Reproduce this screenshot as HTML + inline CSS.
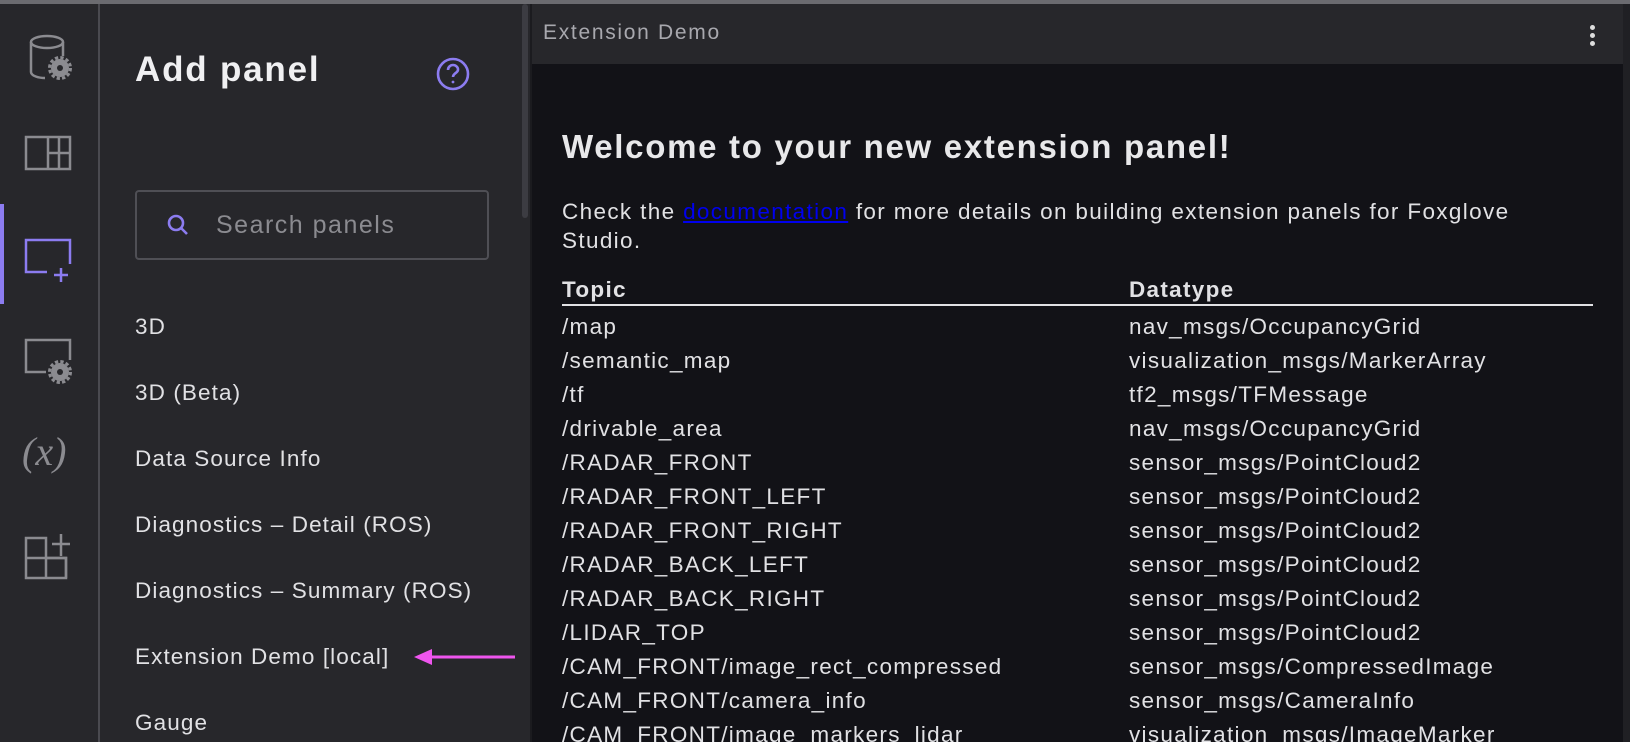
<!DOCTYPE html>
<html><head><meta charset="utf-8"><style>
*{margin:0;padding:0;box-sizing:border-box}
html,body{width:1630px;height:742px;overflow:hidden}
body{background:#27272b;font-family:"Liberation Sans",sans-serif;position:relative;color:#e1e1e4}
.abs{position:absolute}
.item{position:absolute;left:135px;font-size:22.5px;color:#e1e1e4;white-space:nowrap;letter-spacing:1.1px}
.row{position:absolute;font-size:22.5px;color:#e1e1e4;white-space:nowrap;letter-spacing:1.3px}
</style></head><body>
<div class="abs" style="left:0;top:0;width:1630px;height:4px;background:#6b6b70"></div>
<div class="abs" style="left:0;top:4px;width:100px;height:738px;background:#27272b;border-right:2px solid #4a4a50"></div>
<div class="abs" style="left:0;top:204px;width:4px;height:100px;background:#8c7cf0"></div>
<svg class="abs" style="left:0;top:4px" width="100" height="738" fill="none" stroke="#8b8b90" stroke-width="2.5">
 <ellipse cx="47" cy="38" rx="16" ry="6"/>
 <path d="M31 38v30c0 4 8 6 14 6M63 38v14"/>
 <circle cx="60" cy="64" r="9" fill="#8b8b90" stroke="none"/>
 <circle cx="60" cy="64" r="10.5" stroke-dasharray="3.3 2.2" stroke-width="3"/>
 <circle cx="60" cy="64" r="3" fill="#27272b" stroke="none"/>
 <rect x="26" y="133" width="44" height="32"/>
 <path d="M48 133v32M48 149h22M59 133v32"/>
 <path d="M47 268H26V236h44v24M61 264v14M54 271h14" stroke="#8c7cf0"/>
 <path d="M46 368H26V336h44v20"/>
 <circle cx="60" cy="368" r="9" fill="#8b8b90" stroke="none"/>
 <circle cx="60" cy="368" r="10.5" stroke-dasharray="3.3 2.2" stroke-width="3"/>
 <circle cx="60" cy="368" r="3" fill="#27272b" stroke="none"/>
 <path d="M26 534h20v40H26zM26 554h40v20H46M61 530v22M52 540h18"/>
 <path d="M46 554h20v20"/>
</svg>
<div class="abs" style="left:22px;top:428px;font-family:'Liberation Serif',serif;font-size:40px;color:#8b8b90;font-style:italic">(<i>x</i>)</div>
<div class="abs" style="left:135px;top:50px;font-size:35px;font-weight:bold;color:#f0f0f2;letter-spacing:1.8px">Add panel</div>
<svg class="abs" style="left:436px;top:57px" width="34" height="34" fill="none" stroke="#8c7cf0" stroke-width="2.6">
 <circle cx="17" cy="17" r="15"/>
 <path d="M12 13c0-3 2.5-5 5-5s5 2 5 4.6c0 3.4-5 3.6-5 7.4"/>
 <circle cx="17" cy="25" r="1.4" fill="#8c7cf0" stroke="none"/>
</svg>
<div class="abs" style="left:135px;top:190px;width:354px;height:70px;border:2px solid #4f4f55;border-radius:4px"></div>
<svg class="abs" style="left:165px;top:212px" width="28" height="28" fill="none" stroke="#8c7cf0" stroke-width="2.6">
 <circle cx="11" cy="11" r="7"/><path d="M16 16l6 6"/>
</svg>
<div class="abs" style="left:216px;top:211px;font-size:25px;color:#8b8b90;letter-spacing:1.5px">Search panels</div>
<div class="item" style="top:314px">3D</div>
<div class="item" style="top:380px">3D (Beta)</div>
<div class="item" style="top:446px">Data Source Info</div>
<div class="item" style="top:512px">Diagnostics – Detail (ROS)</div>
<div class="item" style="top:578px">Diagnostics – Summary (ROS)</div>
<div class="item" style="top:644px">Extension Demo [local]</div>
<div class="item" style="top:710px">Gauge</div>
<svg class="abs" style="left:410px;top:646px" width="105" height="22">
 <path d="M4 11L22 3v16z" fill="#ee55ee"/><path d="M20 11h92" stroke="#ee55ee" stroke-width="3"/>
</svg>
<div class="abs" style="left:522px;top:4px;width:6px;height:214px;background:#3c3c42;border-radius:3px"></div>
<div class="abs" style="left:530px;top:4px;width:1100px;height:738px;background:#1b1b1f"></div>
<div class="abs" style="left:532px;top:4px;width:1091px;height:60px;background:#27272b"></div>
<div class="abs" style="left:543px;top:21px;font-size:21px;color:#a8a8ae;letter-spacing:1.7px">Extension Demo</div>
<div class="abs" style="left:1590px;top:25px;width:5px;height:5px;border-radius:50%;background:#ddd;box-shadow:0 8px 0 #ddd,0 16px 0 #ddd"></div>
<div class="abs" style="left:532px;top:64px;width:1091px;height:678px;background:#121217"></div>
<div class="abs" style="left:1623px;top:4px;width:7px;height:738px;background:#202024"></div>
<div class="abs" style="left:562px;top:128px;font-size:33px;font-weight:bold;color:#e8e8ea;letter-spacing:1.7px;white-space:nowrap">Welcome to your new extension panel!</div>
<div class="abs" style="left:562px;top:197px;font-size:22.5px;line-height:29px;color:#e1e1e4;width:1060px;letter-spacing:1.35px;white-space:nowrap">Check the <span style="color:#0000ee;text-decoration:underline">documentation</span> for more details on building extension panels for Foxglove<br>Studio.</div>
<div class="row" style="left:562px;top:277px;font-weight:bold">Topic</div>
<div class="row" style="left:1129px;top:277px;font-weight:bold">Datatype</div>
<div class="abs" style="left:562px;top:304px;width:1031px;height:2px;background:#e1e1e4"></div>
<div class="row" style="left:562px;top:310px;line-height:34px">/map<br>/semantic_map<br>/tf<br>/drivable_area<br>/RADAR_FRONT<br>/RADAR_FRONT_LEFT<br>/RADAR_FRONT_RIGHT<br>/RADAR_BACK_LEFT<br>/RADAR_BACK_RIGHT<br>/LIDAR_TOP<br>/CAM_FRONT/image_rect_compressed<br>/CAM_FRONT/camera_info<br>/CAM_FRONT/image_markers_lidar</div>
<div class="row" style="left:1129px;top:310px;line-height:34px">nav_msgs/OccupancyGrid<br>visualization_msgs/MarkerArray<br>tf2_msgs/TFMessage<br>nav_msgs/OccupancyGrid<br>sensor_msgs/PointCloud2<br>sensor_msgs/PointCloud2<br>sensor_msgs/PointCloud2<br>sensor_msgs/PointCloud2<br>sensor_msgs/PointCloud2<br>sensor_msgs/PointCloud2<br>sensor_msgs/CompressedImage<br>sensor_msgs/CameraInfo<br>visualization_msgs/ImageMarker</div>
</body></html>
